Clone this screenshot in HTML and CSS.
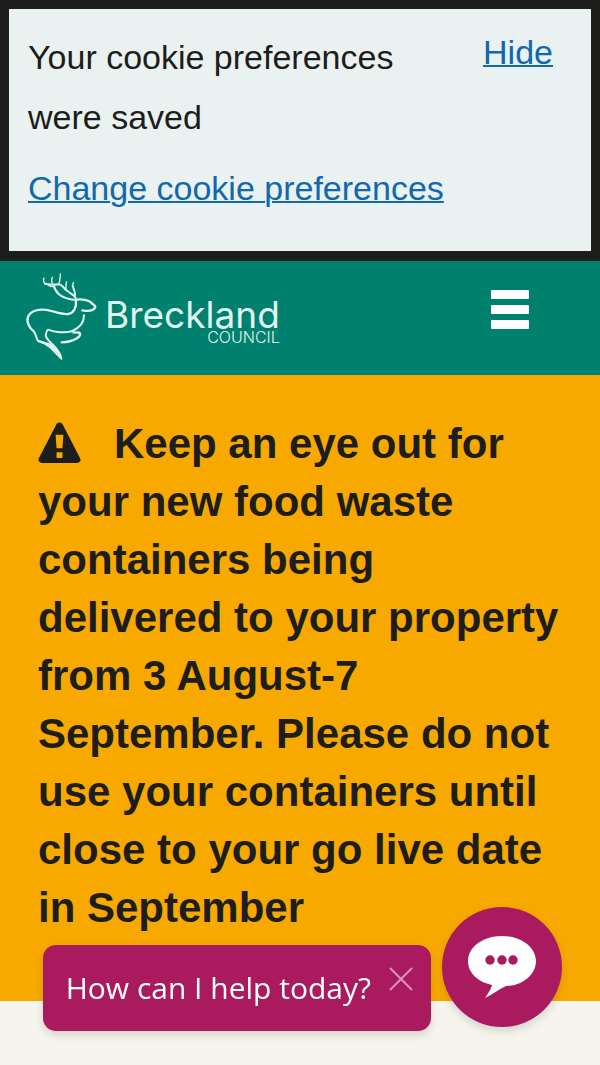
FILE: index.html
```html
<!DOCTYPE html>
<html lang="en">
<head>
<meta charset="utf-8">
<meta name="viewport" content="width=device-width, initial-scale=1">
<title>Breckland Council</title>
<link rel="stylesheet" href="styles.css">
</head>
<body>
<section class="cookies" aria-label="Cookie preferences">
  <div class="cookies-message">
    <p class="cookies-text">Your cookie preferences were saved</p>
    <a class="cookies-link" href="#preferences">Change cookie preferences</a>
  </div>
  <a class="cookies-hide" href="#hide">Hide</a>
</section>
<header class="header">
  <a class="logo" href="#home" aria-label="Breckland Council">
    <svg class="logo-stag" viewBox="0 0 240 285" aria-hidden="true">
      <g fill="none" stroke="#e0f5ed" stroke-linecap="round" stroke-linejoin="round">
        <path stroke-width="7" d="M168 89C186 86 206 90 214 98C220 105 229 108 225 113C220 122 204 124 187 121M168 92C170 112 161 129 145 132C120 134 98 121 72 119C52 117 30 124 24 141C18 158 30 176 42 185"/>
        <path stroke-width="6" d="M42 185C48 193 48 203 54 213C67 214 79 224 90 231L124 266C121 249 109 234 94 220C84 210 74 200 78 192C80 184 80 180 84 179C104 187 137 190 157 183C178 174 192 157 192 136"/>
        <path stroke-width="7" d="M160 187L177 188C184 191 179 200 171 205C158 213 140 217 125 217M57 214L90 224L119 253"/>
        <path stroke-width="6" d="M168 90C147 88 127 83 116 72C109 65 103 56 101 45L75 41M167 83C161 73 149 69 139 61C130 54 128 44 116 43L101 44M165 77C167 66 161 59 158 47"/>
        <path stroke-width="4" d="M101 44C94 40 94 31 97 22M116 43C121 33 120 23 121 12M75 41C70 35 69 30 72 24M82 43C89 51 93 50 101 50M139 61C136 50 139 44 139 36M158 47L160 37"/>
      </g>
    </svg>
    <span class="logo-text"><span class="logo-name">Breckland</span><span class="logo-sub">COUNCIL</span></span>
  </a>
  <button class="menu" type="button" aria-label="Menu"><span class="menu-bar"></span><span class="menu-bar"></span><span class="menu-bar"></span></button>
</header>
<main class="alert">
  <h2 class="alert-text"><svg class="alert-icon" viewBox="0 0 44 42" aria-hidden="true"><path fill="#1d1d1b" fill-rule="evenodd" d="M19 2Q22-1 25 2L43 37Q45 41 40 42H4Q-1 41 1 37ZM18 13L19 27H25L26 13ZM19 31V37H25V31Z"/></svg>Keep an eye out for your new food waste containers being delivered to your property from 3 August-7 September. Please do not use your containers until close to your go live date in September</h2>
</main>
<aside class="chat" aria-label="Chat">
  <div class="chat-prompt">
    <span class="chat-text">How can I help today?</span>
    <button class="chat-close" type="button" aria-label="Close"><svg class="chat-cross" viewBox="0 0 24 24" aria-hidden="true"><path d="M1 1L23 23M23 1L1 23" fill="none" stroke="#dd93bb" stroke-width="2"/></svg></button>
  </div>
  <button class="chat-open" type="button" aria-label="Open chat">
    <svg class="chat-bubble" viewBox="0 0 68 64" aria-hidden="true"><path fill="#fff" d="M34 1C53 1 68 12 68 26C68 40 54 51 38 51C31 54 24 60 17 63C20 59 23 54 24 50C10 47 0 38 0 26C0 12 15 1 34 1Z"/><g fill="#a91a5f"><circle cx="22" cy="25" r="4.7"/><circle cx="34" cy="25" r="4.7"/><circle cx="45" cy="25" r="4.7"/></g></svg>
  </button>
</aside>
</body>
</html>
```
FILE: styles.css
```css
* { box-sizing: border-box; }
body {
  margin: 0;
  background: #f5f4ed;
  color: #1d1d1b;
  font-family: "Liberation Sans", Arial, sans-serif;
}
button { padding: 0; border: 0; background: none; cursor: pointer; }
svg { display: block; }
.cookies {
  display: flex;
  justify-content: space-between;
  align-items: flex-start;
  padding: 18px 38px 32px 19px;
  border: 9px solid #1d1d1b;
  border-bottom-width: 10px;
  background: #eaf2f1;
  font-size: 34px;
}
.cookies-message { flex: 0 1 420px; }
.cookies-text { margin: 0 0 10px; line-height: 60px; }
.cookies-link, .cookies-hide {
  color: #1268ae;
  text-decoration-thickness: 2px;
}
.cookies-link { display: block; line-height: 62px; white-space: nowrap; }
.cookies-hide { line-height: 50px; }
.header {
  display: flex;
  justify-content: space-between;
  align-items: flex-start;
  padding: 9px 71px 10px 20px;
  background: #00806e;
}
.logo { display: flex; gap: 5px; color: #e0f5ed; text-decoration: none; }
.logo-stag { width: 80px; height: 95px; }
.logo-text { display: flex; flex-direction: column; padding-top: 29px; }
.logo-name { font: 400 37px/32px Inter, sans-serif; }
.logo-sub { align-self: flex-end; font: 300 16px/12px Inter, sans-serif; }
.menu { display: grid; gap: 6px; width: 38px; margin-top: 20px; }
.menu-bar { height: 9px; border-radius: 1px; background: #fff; }
.alert { padding: 40px 38px 64px; background: #f7a900; }
.alert-text { margin: 0; font-size: 42px; line-height: 58px; }
.alert-icon {
  display: inline-block;
  width: 43px;
  height: 41px;
  margin-right: 33px;
  vertical-align: -5px;
}
.chat {
  position: fixed;
  right: 38px;
  bottom: 34px;
  display: flex;
  align-items: flex-end;
  gap: 11px;
}
.chat-prompt {
  display: flex;
  align-items: flex-start;
  gap: 18px;
  padding: 22px 18px 22px 23px;
  border-radius: 13px;
  background: #a91a5f;
  color: #fff;
  box-shadow: 0 4px 8px #0002;
}
.chat-text { font: 400 30px/42px "Open Sans", sans-serif; white-space: nowrap; }
.chat-cross { width: 24px; height: 24px; }
.chat-open {
  display: grid;
  place-items: center;
  width: 120px;
  height: 120px;
  margin-bottom: 4px;
  border-radius: 50%;
  background: #a91a5f;
  box-shadow: 0 4px 8px #0002;
}
.chat-bubble { width: 68px; height: 64px; }
```
